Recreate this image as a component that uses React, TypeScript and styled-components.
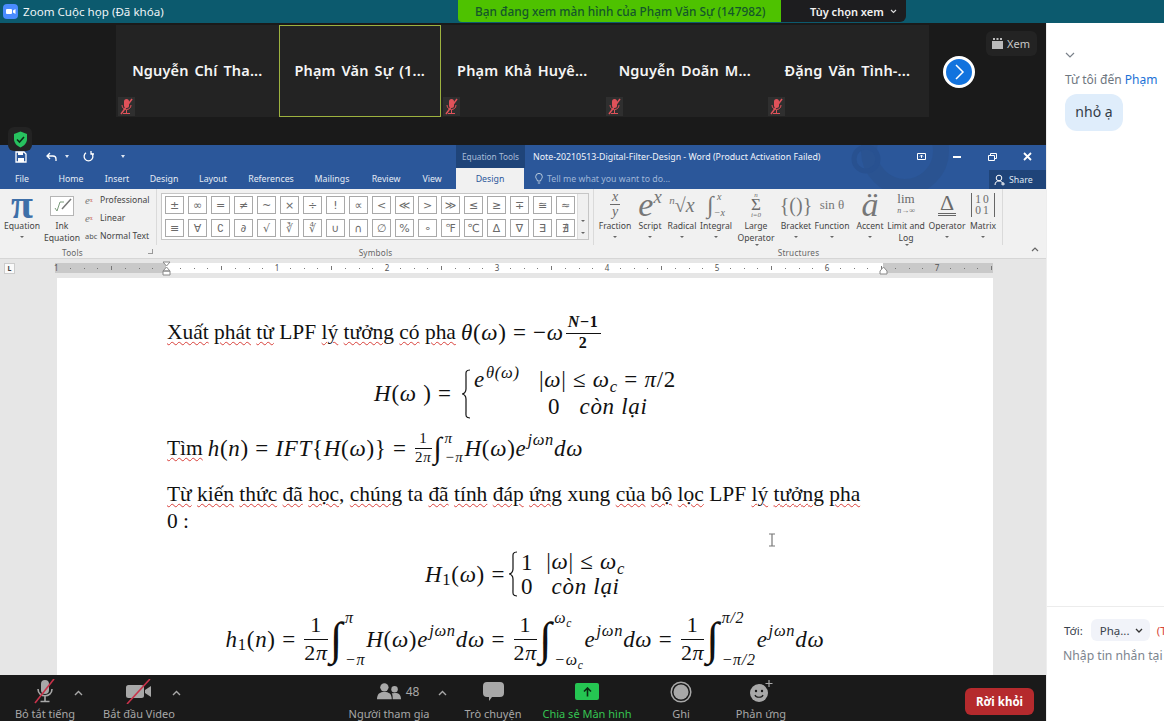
import React from "react";
import styled, { createGlobalStyle } from "styled-components";

const UI = `"Noto Sans", "Open Sans", sans-serif`;
const SERIF = `"Liberation Serif", serif`;

const GlobalStyle = createGlobalStyle`
  html, body { margin: 0; padding: 0; background: #1a1a1a; }
  * { box-sizing: border-box; }
`;

const Screen = styled.div`
  width: 1164px;
  height: 721px;
  position: relative;
  overflow: hidden;
  display: flex;
  flex-direction: column;
  font-family: ${UI};
`;

/* ---------- zoom title bar ---------- */
const TitleBar = styled.div`
  height: 23px;
  flex: none;
  display: flex;
  background: #0c5a6e;
`;
const AppTitle = styled.div`
  width: 458px;
  display: flex;
  align-items: center;
  gap: 5px;
  padding-left: 3px;
  color: #eef4f6;
  font-size: 11.6px;
`;
const Banner = styled.div`
  width: 323px;
  height: 22px;
  background: #4ec200;
  color: #14572a;
  font-size: 11.85px;
  font-weight: 500;
  border-bottom-left-radius: 4px;
  display: flex;
  align-items: center;
  padding-left: 17px;
  white-space: nowrap;
`;
const ViewOptions = styled.div`
  width: 125px;
  height: 22px;
  background: #1d1d1f;
  color: #f2f2f2;
  font-size: 11px;
  font-weight: 600;
  border-bottom-right-radius: 6px;
  display: flex;
  align-items: center;
  gap: 6px;
  padding-left: 29px;
`;

const Body = styled.div`
  flex: 1;
  min-height: 0;
  display: flex;
`;
const Left = styled.div`
  width: 1046px;
  flex: none;
  display: flex;
  flex-direction: column;
`;

/* ---------- gallery strip ---------- */
const Gallery = styled.div`
  height: 122px;
  flex: none;
  background: #1a1a1a;
  display: flex;
  padding: 2px 0 0 116px;
`;
const Tile = styled.div<{ $active?: boolean }>`
  position: relative;
  width: 162.5px;
  height: 92px;
  flex: none;
  background: #232323;
  border: 1px solid ${(p) => (p.$active ? "#9db23f" : "transparent")};
  color: #f5f5f5;
  font-size: 14.5px;
  font-weight: 600;
  letter-spacing: 0.15px;
  word-spacing: 2px;
  display: flex;
  align-items: center;
  justify-content: center;
  padding-bottom: 3px;
  white-space: nowrap;
`;
const MuteBadge = styled.div`
  position: absolute;
  left: 1px;
  bottom: 0;
  width: 17px;
  height: 19px;
  background: #2f2f2f;
  display: flex;
  align-items: center;
  justify-content: center;
`;
const NextWrap = styled.div`
  margin: 30px 0 0 14px;
  width: 32px;
  height: 32px;
  flex: none;
`;
const ViewButton = styled.div`
  margin: 6px 0 0 11px;
  width: 51px;
  height: 25px;
  background: #232323;
  border-radius: 6px;
  color: #c8c8c8;
  font-size: 11px;
  display: flex;
  align-items: center;
  justify-content: center;
  gap: 4px;
`;
const ShieldBox = styled.div`
  position: absolute;
  left: 8px;
  top: 127px;
  width: 24px;
  height: 24px;
  background: #232323;
  border-radius: 6px;
  display: flex;
  align-items: center;
  justify-content: center;
`;

/* ---------- word window ---------- */
const Word = styled.div`
  flex: 1;
  min-height: 0;
  display: flex;
  flex-direction: column;
`;
const WordHead = styled.div`
  position: relative;
  height: 44px;
  flex: none;
  background: #2b579a;
  color: #f2f5fa;
  overflow: hidden;
`;
const HeadPattern = styled.svg`
  position: absolute;
  left: 780px;
  top: 0;
`;
const QatRow = styled.div`
  position: relative;
  height: 23px;
  display: flex;
  align-items: center;
  font-size: 9.5px;
`;
const QatIcon = styled.div<{ $w: number }>`
  width: ${(p) => p.$w}px;
  flex: none;
  display: flex;
  justify-content: center;
  align-items: center;
`;
const ContextLabel = styled.div`
  margin-left: 316px;
  width: 69px;
  height: 23px;
  flex: none;
  background: #1f4479;
  color: #a9bcd8;
  font-size: 8.3px;
  display: flex;
  align-items: center;
  justify-content: center;
`;
const DocTitle = styled.div`
  margin-left: 8px;
  width: 371px;
  flex: none;
  font-size: 8.8px;
  white-space: nowrap;
`;
const WinButton = styled.div`
  width: 35.3px;
  flex: none;
  display: flex;
  justify-content: center;
`;
const TabRow = styled.div`
  position: relative;
  height: 21px;
  display: flex;
  align-items: center;
  font-size: 8.8px;
`;
const Tab = styled.div<{ $w: number; $ml?: number; $active?: boolean }>`
  width: ${(p) => p.$w}px;
  margin-left: ${(p) => p.$ml ?? 0}px;
  height: 21px;
  flex: none;
  display: flex;
  align-items: center;
  justify-content: center;
  background: ${(p) => (p.$active ? "#f1f1f1" : "transparent")};
  color: ${(p) => (p.$active ? "#2b579a" : "#e6ecf5")};
`;
const TellMe = styled.div`
  margin-left: 11px;
  width: 454px;
  flex: none;
  display: flex;
  align-items: center;
  gap: 4px;
  color: #9fb6d8;
  font-size: 8.8px;
`;
const ShareBox = styled.div`
  width: 57px;
  height: 19px;
  flex: none;
  align-self: flex-end;
  background: #1f4479;
  display: flex;
  align-items: center;
  gap: 3px;
  padding-left: 5px;
  color: #dfe7f2;
  font-size: 8.8px;
`;

/* ---------- ribbon ---------- */
const Ribbon = styled.div`
  height: 70px;
  flex: none;
  background: #f1f1f1;
  border-bottom: 1px solid #d6d6d6;
  display: flex;
  color: #444;
  font-size: 8.6px;
`;
const Group = styled.div<{ $w: number }>`
  width: ${(p) => p.$w}px;
  flex: none;
  display: flex;
  flex-direction: column;
  position: relative;
`;
const GroupBody = styled.div`
  flex: 1;
  min-height: 0;
  display: flex;
  border-right: 1px solid #dadada;
  margin-bottom: 2px;
`;
const GroupLabel = styled.div<{ $pr?: number }>`
  height: 11px;
  line-height: 11px;
  text-align: center;
  color: #666;
  font-size: 8.2px;
  letter-spacing: 0.2px;
  padding-right: ${(p) => p.$pr ?? 0}px;
`;
const RibbonItem = styled.div<{ $w: number }>`
  width: ${(p) => p.$w}px;
  flex: none;
  display: flex;
  flex-direction: column;
  align-items: center;
  text-align: center;
  line-height: 12px;
  white-space: nowrap;
`;
const GlyphBox = styled.div`
  height: 31px;
  flex: none;
  display: flex;
  align-items: center;
  justify-content: center;
  font-family: ${SERIF};
  color: #6a6a6a;
`;
const Caret = styled.span`
  display: block;
  margin: 4px auto 0;
  width: 0;
  height: 0;
  border-left: 2px solid transparent;
  border-right: 2px solid transparent;
  border-top: 2px solid #666;
`;
const CaretInline = styled(Caret)`
  display: inline-block;
  margin: 0 0 1px 2px;
  vertical-align: middle;
`;
const PiGlyph = styled.span`
  font-family: ${SERIF};
  font-size: 40px;
  font-weight: 700;
  color: #3e6fa8;
  line-height: 24px;
`;
const InkBox = styled.div`
  width: 24px;
  height: 20px;
  margin-top: 7px;
  border: 1px solid #b5b5b5;
  background: #fff;
  display: flex;
  align-items: center;
  justify-content: center;
`;
const InkSpacer = styled.div`
  height: 4px;
  flex: none;
`;
const ToolList = styled.div`
  margin-left: 5px;
  padding-top: 5px;
  display: flex;
  flex-direction: column;
  gap: 6px;
`;
const ToolRow = styled.div`
  display: flex;
  align-items: center;
  gap: 1px;
  height: 12px;
  white-space: nowrap;
`;
const ToolMini = styled.span`
  width: 14px;
  font-family: ${SERIF};
  font-style: italic;
  font-size: 11px;
  color: #777;
`;
const MiniDot = styled.span`
  color: #c8564a;
  font-size: 9px;
  font-style: normal;
`;
const AbcMini = styled.span`
  width: 14px;
  font-size: 7.4px;
  color: #555;
`;
const Launcher = styled.div`
  position: absolute;
  right: 4px;
  bottom: 4px;
  width: 5px;
  height: 5px;
  border-right: 1px solid #999;
  border-bottom: 1px solid #999;
`;
const SymbolBox = styled.div`
  margin: 4px 0 0 4px;
  width: 428px;
  height: 47px;
  background: #fff;
  border: 1px solid #c6c6c6;
  display: flex;
`;
const SymbolGrid = styled.div`
  width: 415px;
  padding: 2px 0 0 3px;
  display: grid;
  grid-template-columns: repeat(18, 23px);
  grid-auto-rows: 23px;
`;
const SymbolKey = styled.div`
  width: 19px;
  height: 18px;
  border: 1px solid #a9a9a9;
  color: #6a6a6a;
  font-family: "DejaVu Sans", sans-serif;
  font-size: 11px;
  display: flex;
  align-items: center;
  justify-content: center;
`;
const ScrollCol = styled.div`
  flex: 1;
  background: #f0f0f0;
  border-left: 1px solid #ddd;
  display: flex;
  flex-direction: column;
  align-items: center;
  justify-content: flex-end;
  gap: 6px;
  padding-bottom: 5px;
`;
const CollapseArrow = styled.div`
  margin: auto 7px 3px auto;
`;

/* structure glyphs */
const Frac = styled.span`
  display: inline-flex;
  flex-direction: column;
  align-items: center;
  vertical-align: middle;
  line-height: 1;
`;
const FracTop = styled.span`
  border-bottom: 1px solid currentColor;
  padding: 0 2px;
`;
const SmallFrac = styled(Frac)`
  font-size: 14px;
  font-style: italic;
`;
const BigE = styled.span<{ $size: number }>`
  font-size: ${(p) => p.$size}px;
  font-style: italic;
  color: #777;
  line-height: 26px;
`;
const BigSup = styled.sup`
  font-size: 0.55em;
  vertical-align: 0.7em;
  line-height: 0;
`;
const SumStack = styled.span`
  display: inline-flex;
  flex-direction: column;
  align-items: center;
  font-size: 7px;
  line-height: 8px;
  font-style: italic;
`;
const SumSign = styled.span`
  font-size: 17px;
  line-height: 12px;
  font-style: normal;
`;
const GlyphLimits = styled.span`
  display: inline-flex;
  flex-direction: column;
  justify-content: space-between;
  height: 26px;
  font-size: 10px;
  line-height: 10px;
  font-style: italic;
`;
const LimStack = styled.span`
  display: inline-flex;
  flex-direction: column;
  align-items: center;
  font-size: 13px;
  line-height: 12px;
`;
const LimSub = styled.span`
  font-size: 8px;
  font-style: italic;
`;
const OpStack = styled.span`
  border-bottom: 3px double #666;
  font-size: 22px;
  line-height: 20px;
  padding: 0 2px;
`;
const MatrixGlyph = styled.span`
  border-left: 1px solid #666;
  border-right: 1px solid #666;
  padding: 1px 3px;
  font-size: 11.5px;
  line-height: 11px;
  letter-spacing: 2px;
  text-align: center;
  display: inline-block;
`;
const UprightSpan = styled.span`
  font-style: normal;
`;

/* ---------- ruler ---------- */
const RulerRow = styled.div`
  position: relative;
  height: 18px;
  flex: none;
  background: #e6e6e6;
  display: flex;
  align-items: center;
`;
const RulerCorner = styled.div`
  margin-left: 4px;
  width: 11px;
  height: 11px;
  background: #fafafa;
  border: 1px solid #ccc;
  color: #444;
  font-size: 7px;
  font-weight: 700;
  line-height: 9px;
  text-align: center;
`;
const RulerTrack = styled.div`
  margin-left: 40px;
  width: 938px;
  height: 10px;
  overflow: hidden;
  display: flex;
  color: #555;
  font-size: 8px;
  background: linear-gradient(90deg, #c9c9c9 111px, #fff 111px, #fff 828px, #c9c9c9 828px);
  padding-left: 2px;
`;
const RulerCell = styled.div`
  width: 110px;
  flex: none;
  display: grid;
  grid-template-columns: repeat(8, 13.75px);
  align-items: center;
  justify-items: end;
`;
const Tick = styled.span<{ $big?: boolean }>`
  width: 1px;
  height: ${(p) => (p.$big ? 4 : 1)}px;
  background: #777;
`;
const RulerNum = styled.span`
  transform: translateX(50%);
  line-height: 10px;
`;
const RulerFirst = styled.span`
  position: absolute;
  left: 54px;
  line-height: 10px;
  font-size: 8px;
  color: #555;
`;
const IndentMark = styled.svg<{ $x: number }>`
  position: absolute;
  left: ${(p) => p.$x}px;
  top: 2px;
`;

/* ---------- document ---------- */
const DocArea = styled.div`
  position: relative;
  flex: 1;
  min-height: 0;
  background: #e6e6e6;
  overflow: hidden;
  padding: 1px 0 0 57px;
`;
const Page = styled.div`
  width: 936px;
  height: 600px;
  background: #fff;
  padding: 35px 110px 0;
  color: #111;
  font-family: ${SERIF};
  font-size: 21.45px;
  line-height: 27px;
`;
const Para = styled.div<{ $mt?: number }>`
  margin-top: ${(p) => p.$mt ?? 0}px;
  white-space: nowrap;
  display: flex;
  align-items: center;
`;
const TextBlock = styled.div<{ $mt?: number }>`
  margin-top: ${(p) => p.$mt ?? 0}px;
  white-space: nowrap;
`;
const Wavy = styled.span`
  text-decoration: underline wavy #d8403a 1px;
  text-underline-offset: 2px;
`;
const MathRow = styled.span`
  display: inline-flex;
  align-items: center;
  margin-left: 5px;
  font-size: 23px;
  letter-spacing: 0.7px;
  white-space: pre;
`;
const MathCenter = styled.div<{ $mt?: number; $h?: number }>`
  margin-top: ${(p) => p.$mt ?? 0}px;
  height: ${(p) => (p.$h ? `${p.$h}px` : "auto")};
  display: flex;
  justify-content: center;
  align-items: center;
  font-size: 23px;
  letter-spacing: 0.7px;
  white-space: pre;
  overflow: visible;
`;
const I = styled.i`
  font-style: italic;
`;
const Sup = styled.span`
  font-size: 0.72em;
  font-style: italic;
  position: relative;
  top: -0.55em;
  margin-left: 1px;
`;
const Sub = styled.span`
  font-size: 0.72em;
  font-style: italic;
  position: relative;
  top: 0.3em;
`;
const EqFrac = styled.span<{ $size?: number }>`
  display: inline-flex;
  flex-direction: column;
  align-items: center;
  font-size: ${(p) => p.$size ?? 15}px;
  line-height: 1.18;
  margin: 0 2px;
`;
const EqFracTop = styled.span`
  border-bottom: 1px solid #111;
  padding: 0 2px 1px;
  align-self: stretch;
  text-align: center;
`;
const IntWrap = styled.span<{ $size: number }>`
  display: inline-flex;
  align-items: center;
  font-size: ${(p) => p.$size}px;
  line-height: 1;
  margin-right: 1px;
`;
const IntSign = styled.span`
  font-family: ${SERIF};
`;
const IntLimits = styled.span<{ $size: number; $h: number }>`
  display: inline-flex;
  flex-direction: column;
  justify-content: space-between;
  height: ${(p) => p.$h}px;
  font-size: ${(p) => p.$size}px;
  line-height: 1;
  margin-left: 2px;
  font-style: italic;
`;
const Brace = styled.svg`
  margin: 0 3px;
  flex: none;
`;
const Cases = styled.span<{ $cols: string; $rowH: number }>`
  display: inline-grid;
  grid-template-columns: ${(p) => p.$cols};
  grid-auto-rows: ${(p) => p.$rowH}px;
  align-items: center;
  justify-items: center;
`;
const IBeam = styled.svg`
  position: absolute;
  left: 768px;
  top: 256px;
`;

/* ---------- zoom toolbar ---------- */
const Toolbar = styled.div`
  height: 46px;
  flex: none;
  background: #1a1a1a;
  display: flex;
  position: relative;
`;
const ToolItem = styled.div<{ $w: number; $ml?: number; $green?: boolean }>`
  position: relative;
  width: ${(p) => p.$w}px;
  margin-left: ${(p) => p.$ml ?? 0}px;
  flex: none;
  display: flex;
  flex-direction: column;
  align-items: center;
  color: ${(p) => (p.$green ? "#35c552" : "#a8a8a8")};
  font-size: 11px;
  white-space: nowrap;
`;
const ToolIcon = styled.div<{ $pl?: number }>`
  height: 30px;
  display: flex;
  align-items: center;
  justify-content: center;
  gap: 5px;
  padding-top: 4px;
  padding-left: ${(p) => p.$pl ?? 0}px;
  color: #a8a8a8;
  font-size: 12px;
`;
const ToolLabel = styled.div`
  line-height: 14px;
  margin-top: 3px;
`;
const ToolCaret = styled.svg<{ $x: number }>`
  position: absolute;
  left: ${(p) => p.$x}px;
  top: 15px;
`;
const ShareIcon = styled.div`
  width: 24px;
  height: 17px;
  background: #25c552;
  border-radius: 2px;
  display: flex;
  align-items: center;
  justify-content: center;
`;
const LeaveButton = styled.div`
  margin: 13px 12px 0 auto;
  width: 69px;
  height: 27px;
  background: #b52a2d;
  border-radius: 6px;
  color: #fff;
  font-size: 11.5px;
  font-weight: 700;
  display: flex;
  align-items: center;
  justify-content: center;
`;

/* ---------- chat ---------- */
const Chat = styled.div`
  width: 118px;
  flex: none;
  background: #fff;
  border-left: 1px solid #eee;
  display: flex;
  flex-direction: column;
  overflow: hidden;
  white-space: nowrap;
`;
const ChatHead = styled.div`
  height: 36px;
  flex: none;
  padding: 18px 0 0 18px;
`;
const ChatMeta = styled.div`
  margin: 13px 0 0 18px;
  font-size: 12px;
  line-height: 16px;
  color: #6e7680;
`;
const ChatTarget = styled.span`
  color: #1a71d6;
`;
const ChatBubble = styled.div`
  margin: 6px 0 0 18px;
  width: 58px;
  height: 37px;
  background: #dfedfb;
  border-radius: 12px;
  color: #333c47;
  font-size: 14px;
  display: flex;
  align-items: center;
  justify-content: center;
  padding-bottom: 2px;
`;
const ChatFooter = styled.div`
  margin-top: auto;
  height: 115px;
  flex: none;
  border-top: 1px solid #ececec;
  padding: 12px 0 0 17px;
`;
const ToRow = styled.div`
  display: flex;
  align-items: center;
  gap: 8px;
  font-size: 11.5px;
  color: #39424c;
`;
const ToPill = styled.div`
  width: 59px;
  height: 22px;
  flex: none;
  background: #f1f3f9;
  border-radius: 6px;
  display: flex;
  align-items: center;
  gap: 5px;
  padding-left: 9px;
  font-size: 11.5px;
`;
const ToHint = styled.span`
  color: #d9483b;
  margin-left: -1px;
`;
const ChatInput = styled.div`
  margin: 5px 0 0 -1px;
  font-size: 12.2px;
  line-height: 20px;
  color: #7c848e;
`;

const CaretWhite = styled.span`
  width: 0;
  height: 0;
  border-left: 2.5px solid transparent;
  border-right: 2.5px solid transparent;
  border-top: 3px solid #dfe7f2;
`;

/* ---------- drawn icons ---------- */
const MuteMini = () => (
  <svg width="15" height="17" viewBox="0 0 15 17">
    <rect x="5" y="1" width="5" height="9" rx="2.5" fill="#e0525a" />
    <path d="M3 7c0 6 9 6 9 0M7.5 12v3M4 15.5h7" stroke="#e0525a" fill="none" />
    <path d="M13 1 2 16" stroke="#e0525a" strokeWidth="1.5" />
  </svg>
);

const MicIcon = () => (
  <svg width="26" height="25" viewBox="0 0 26 25">
    <rect x="9" y="1" width="8" height="14" rx="4" fill="#a8a8a8" />
    <path d="M6 10c0 9 14 9 14 0M13 17v5M8.500 22.500h9" stroke="#a8a8a8" strokeWidth="1.6" fill="none" />
    <path d="M22 0 3 24" stroke="#c8324a" strokeWidth="1.6" />
  </svg>
);

const VideoIcon = () => (
  <svg width="28" height="25" viewBox="0 0 28 25">
    <rect x="1" y="6" width="18" height="13" rx="2.5" fill="#a8a8a8" />
    <path d="M20 11l6-4v11l-6-4z" fill="#a8a8a8" />
    <path d="M25 0 2 25" stroke="#c8324a" strokeWidth="1.6" />
  </svg>
);

const PeopleIcon = () => (
  <svg width="24" height="19" viewBox="0 0 26 19">
    <circle cx="8" cy="5" r="4.500" fill="#a8a8a8" />
    <circle cx="19" cy="7" r="3.500" fill="#a8a8a8" />
    <path d="M0 18c0-6 3-8 8-8s8 2 8 8z" fill="#a8a8a8" />
    <path d="M17 18h9c0-5-2-7-7-7-1 0-2 .2-3 .5 1 1.500 1 4 1 6.500z" fill="#a8a8a8" />
  </svg>
);

const ChatIcon = () => (
  <svg width="21" height="20" viewBox="0 0 21 20">
    <path d="M4 0h13a4 4 0 0 1 4 4v7a4 4 0 0 1-4 4H9l-3 4v-4H4a4 4 0 0 1-4-4V4a4 4 0 0 1 4-4z" fill="#a8a8a8" />
  </svg>
);

const RecordIcon = () => (
  <svg width="22" height="22" viewBox="0 0 22 22">
    <circle cx="11" cy="11" r="9.800" fill="none" stroke="#a8a8a8" strokeWidth="1.500" />
    <circle cx="11" cy="11" r="7.500" fill="#a8a8a8" />
  </svg>
);

const ReactIcon = () => (
  <svg width="24" height="23" viewBox="0 0 24 23">
    <circle cx="10" cy="13" r="9" fill="#a8a8a8" />
    <circle cx="7" cy="11" r="1.200" fill="#1a1a1a" />
    <circle cx="13" cy="11" r="1.200" fill="#1a1a1a" />
    <path d="M6 15c1 3 7 3 8 0" stroke="#1a1a1a" strokeWidth="1.200" fill="none" />
    <path d="M20 0v7M16.500 3.500h7" stroke="#a8a8a8" strokeWidth="1.200" />
  </svg>
);

const UpCaret = ({ x }: { x: number }) => (
  <ToolCaret $x={x} width="9" height="6" viewBox="0 0 9 6">
    <path d="M1 5l3.500-3.500L8 5" stroke="#a8a8a8" strokeWidth="1.400" fill="none" />
  </ToolCaret>
);

const CurlyBrace = ({ h, w = 10 }: { h: number; w?: number }) => (
  <Brace width={w} height={h} viewBox={`0 0 10 ${h}`} preserveAspectRatio="none">
    <path
      d={`M9 1C4 1 5 4 5 8V${h / 2 - 5}C5 ${h / 2 - 2} 3 ${h / 2} 1 ${h / 2}C3 ${h / 2} 5 ${h / 2 + 2} 5 ${h / 2 + 5}V${h - 8}C5 ${h - 4} 4 ${h - 1} 9 ${h - 1}`}
      fill="none"
      stroke="#111"
      strokeWidth="1.200"
    />
  </Brace>
);

const SYMBOLS = [
  "±", "∞", "=", "≠", "~", "×", "÷", "!", "∝", "<", "≪", ">", "≫", "≤", "≥", "∓", "≅", "≈",
  "≡", "∀", "∁", "∂", "√", "∛", "∜", "∪", "∩", "∅", "%", "∘", "℉", "℃", "∆", "∇", "∃", "∄",
];

const TILES = [
  { name: "Nguyễn Chí Tha...", muted: true },
  { name: "Phạm Văn Sự (1...", active: true },
  { name: "Phạm Khả Huyê...", muted: true },
  { name: "Nguyễn Doãn M...", muted: true },
  { name: "Đặng Văn Tình-...", muted: true },
];

const TABS = [
  { label: "File", w: 44 },
  { label: "Home", w: 54 },
  { label: "Insert", w: 38 },
  { label: "Design", w: 56 },
  { label: "Layout", w: 42 },
  { label: "References", w: 74 },
  { label: "Mailings", w: 48 },
  { label: "Review", w: 60 },
  { label: "View", w: 32 },
];

const RULER = [0, 1, 2, 3, 4, 5, 6, 7, 8];

const Ruler = () => (
  <RulerTrack>
    {RULER.map((n) => (
      <RulerCell key={n}>
        {[0, 1, 2, 3, 4, 5, 6].map((t) => (
          <Tick key={t} $big={t === 3} />
        ))}
        {n > 0 ? <RulerNum>{n}</RulerNum> : <Tick />}
      </RulerCell>
    ))}
  </RulerTrack>
);

const Ribbons = () => (
  <Ribbon>
    <Group $w={157}>
      <GroupBody>
        <RibbonItem $w={44}>
          <GlyphBox>
            <PiGlyph>π</PiGlyph>
          </GlyphBox>
          Equation
          <Caret />
        </RibbonItem>
        <RibbonItem $w={36}>
          <InkBox>
            <svg width="20" height="16" viewBox="0 0 20 16">
              <path d="M3 10l2 3 3-9h4" stroke="#7a9a7a" fill="none" />
              <path d="M10 11 19 1" stroke="#777" strokeWidth="1.500" />
            </svg>
          </InkBox>
          <InkSpacer />
          Ink
          <br />
          Equation
        </RibbonItem>
        <ToolList>
          <ToolRow>
            <ToolMini>
              e<MiniDot>ˣ</MiniDot>
            </ToolMini>
            Professional
          </ToolRow>
          <ToolRow>
            <ToolMini>
              e<MiniDot>ˣ</MiniDot>
            </ToolMini>
            Linear
          </ToolRow>
          <ToolRow>
            <AbcMini>abc</AbcMini>Normal Text
          </ToolRow>
        </ToolList>
      </GroupBody>
      <GroupLabel $pr={12}>Tools</GroupLabel>
      <Launcher />
    </Group>

    <Group $w={437}>
      <GroupBody>
        <SymbolBox>
          <SymbolGrid>
            {SYMBOLS.map((s) => (
              <SymbolKey key={s}>{s}</SymbolKey>
            ))}
          </SymbolGrid>
          <ScrollCol>
            <Caret />
            <Caret />
          </ScrollCol>
        </SymbolBox>
      </GroupBody>
      <GroupLabel>Symbols</GroupLabel>
    </Group>

    <Group $w={409}>
      <GroupBody>
        <RibbonItem $w={42}>
          <GlyphBox>
            <SmallFrac>
              <FracTop>x</FracTop>
              <span>y</span>
            </SmallFrac>
          </GlyphBox>
          Fraction
          <Caret />
        </RibbonItem>
        <RibbonItem $w={28}>
          <GlyphBox>
            <BigE $size={34}>
              e<BigSup>x</BigSup>
            </BigE>
          </GlyphBox>
          Script
          <Caret />
        </RibbonItem>
        <RibbonItem $w={36}>
          <GlyphBox>
            <BigE $size={20}>
              <BigSup>n</BigSup>√x
            </BigE>
          </GlyphBox>
          Radical
          <Caret />
        </RibbonItem>
        <RibbonItem $w={32}>
          <GlyphBox>
            <BigE $size={24}>∫</BigE>
            <GlyphLimits>
              <span>x</span>
              <span>−x</span>
            </GlyphLimits>
          </GlyphBox>
          Integral
          <Caret />
        </RibbonItem>
        <RibbonItem $w={48}>
          <GlyphBox>
            <SumStack>
              n<SumSign>Σ</SumSign>i=0
            </SumStack>
          </GlyphBox>
          Large
          <br />
          Operator
          <CaretInline />
        </RibbonItem>
        <RibbonItem $w={32}>
          <GlyphBox>
            <BigE $size={20}>
              <UprightSpan>{"{()}"}</UprightSpan>
            </BigE>
          </GlyphBox>
          Bracket
          <Caret />
        </RibbonItem>
        <RibbonItem $w={40}>
          <GlyphBox>
            <BigE $size={13}>
              <UprightSpan>sin θ</UprightSpan>
            </BigE>
          </GlyphBox>
          Function
          <Caret />
        </RibbonItem>
        <RibbonItem $w={36}>
          <GlyphBox>
            <BigE $size={34}>ä</BigE>
          </GlyphBox>
          Accent
          <Caret />
        </RibbonItem>
        <RibbonItem $w={36}>
          <GlyphBox>
            <LimStack>
              lim
              <LimSub>n→∞</LimSub>
            </LimStack>
          </GlyphBox>
          Limit and
          <br />
          Log
          <CaretInline />
        </RibbonItem>
        <RibbonItem $w={46}>
          <GlyphBox>
            <OpStack>Δ</OpStack>
          </GlyphBox>
          Operator
          <Caret />
        </RibbonItem>
        <RibbonItem $w={26}>
          <GlyphBox>
            <MatrixGlyph>
              10
              <br />
              01
            </MatrixGlyph>
          </GlyphBox>
          Matrix
          <Caret />
        </RibbonItem>
      </GroupBody>
      <GroupLabel>Structures</GroupLabel>
    </Group>
    <CollapseArrow>
      <svg width="8" height="5" viewBox="0 0 8 5">
        <path d="M1 4l3-3 3 3" stroke="#666" strokeWidth="1.200" fill="none" />
      </svg>
    </CollapseArrow>
  </Ribbon>
);

const Document = () => (
  <DocArea>
    <Page>
      <Para>
        <span>
          <Wavy>Xuất</Wavy> <Wavy>phát</Wavy> <Wavy>từ</Wavy> LPF <Wavy>lý</Wavy> <Wavy>tưởng</Wavy>{" "}
          <Wavy>có</Wavy> <Wavy>pha</Wavy>
        </span>
        <MathRow>
          <I>θ</I>(<I>ω</I>) = −<I>ω</I>
          <EqFrac $size={16}>
            <EqFracTop>
              <b>
                <I>N</I>−1
              </b>
            </EqFracTop>
            <b>2</b>
          </EqFrac>
        </MathRow>
      </Para>

      <MathCenter $mt={15} $h={52}>
        <I>H</I>(<I>ω</I> ) ={" "}
        <CurlyBrace h={50} />
        <Cases $cols="auto auto" $rowH={26}>
          <span>
            <I>e</I>
            <Sup>θ(ω)</Sup>
          </span>
          <span>
            {"   "}|<I>ω</I>| ≤ <I>ω</I>
            <Sub>c</Sub> = <I>π</I>/2
          </span>
          <span />
          <span>
            0{"   "}
            <I>còn lại</I>
          </span>
        </Cases>
      </MathCenter>

      <Para $mt={10}>
        <span>
          <Wavy>Tìm</Wavy>
        </span>
        <MathRow>
          <I>h</I>(<I>n</I>) = <I>IFT</I>
          {"{"}
          <I>H</I>(<I>ω</I>)
          {"}"} ={" "}
          <EqFrac $size={15}>
            <EqFracTop>1</EqFracTop>
            <span>
              2<I>π</I>
            </span>
          </EqFrac>
          <IntWrap $size={30}>
            <IntSign>∫</IntSign>
            <IntLimits $size={15} $h={34}>
              <span>π</span>
              <span>−π</span>
            </IntLimits>
          </IntWrap>
          <I>H</I>(<I>ω</I>)<I>e</I>
          <Sup>jωn</Sup>
          <I>dω</I>
        </MathRow>
      </Para>

      <TextBlock $mt={14}>
        <Wavy>Từ</Wavy> <Wavy>kiến</Wavy> <Wavy>thức</Wavy> <Wavy>đã</Wavy> <Wavy>học</Wavy>, <Wavy>chúng</Wavy> ta{" "}
        <Wavy>đã</Wavy> <Wavy>tính</Wavy> <Wavy>đáp</Wavy> <Wavy>ứng</Wavy> xung <Wavy>của</Wavy> <Wavy>bộ</Wavy>{" "}
        <Wavy>lọc</Wavy> LPF <Wavy>lý</Wavy> <Wavy>tưởng</Wavy> <Wavy>pha</Wavy>
        <br />0 :
      </TextBlock>

      <MathCenter $mt={14} $h={50}>
        <I>H</I>
        <Sub>
          <UprightSpan>1</UprightSpan>
        </Sub>
        (<I>ω</I>) =<CurlyBrace h={46} />
        <Cases $cols="auto auto" $rowH={24}>
          <span>1</span>
          <span>
            {"  "}|<I>ω</I>| ≤ <I>ω</I>
            <Sub>c</Sub>
          </span>
          <span>0</span>
          <span>
            {"  "}
            <I>còn lại</I>
          </span>
        </Cases>
      </MathCenter>

      <MathCenter $mt={6} $h={68}>
        <I>h</I>
        <Sub>
          <UprightSpan>1</UprightSpan>
        </Sub>
        (<I>n</I>) ={" "}
        <EqFrac $size={22}>
          <EqFracTop>1</EqFracTop>
          <span>
            2<I>π</I>
          </span>
        </EqFrac>
        <IntWrap $size={46}>
          <IntSign>∫</IntSign>
          <IntLimits $size={16} $h={58}>
            <span>π</span>
            <span>−π</span>
          </IntLimits>
        </IntWrap>
        <I>H</I>(<I>ω</I>)<I>e</I>
        <Sup>jωn</Sup>
        <I>dω</I> ={" "}
        <EqFrac $size={22}>
          <EqFracTop>1</EqFracTop>
          <span>
            2<I>π</I>
          </span>
        </EqFrac>
        <IntWrap $size={46}>
          <IntSign>∫</IntSign>
          <IntLimits $size={16} $h={58}>
            <span>
              ω<Sub>c</Sub>
            </span>
            <span>
              −ω<Sub>c</Sub>
            </span>
          </IntLimits>
        </IntWrap>
        <I>e</I>
        <Sup>jωn</Sup>
        <I>dω</I> ={" "}
        <EqFrac $size={22}>
          <EqFracTop>1</EqFracTop>
          <span>
            2<I>π</I>
          </span>
        </EqFrac>
        <IntWrap $size={46}>
          <IntSign>∫</IntSign>
          <IntLimits $size={16} $h={58}>
            <span>π/2</span>
            <span>−π/2</span>
          </IntLimits>
        </IntWrap>
        <I>e</I>
        <Sup>jωn</Sup>
        <I>dω</I>
      </MathCenter>
    </Page>
    <IBeam width="8" height="14" viewBox="0 0 8 14">
      <path d="M1 1h6M4 1v12M1 13h6" stroke="#777" strokeWidth="1.200" fill="none" />
    </IBeam>
  </DocArea>
);

const App: React.FC = () => {
  return (
    <Screen>
      <GlobalStyle />

      <TitleBar>
        <AppTitle>
          <svg width="15" height="15" viewBox="0 0 15 15">
            <rect width="15" height="15" rx="4" fill="#4a8cff" />
            <rect x="3" y="5" width="6" height="5" rx="1" fill="#fff" />
            <path d="M10 6.500 12.500 5v5L10 8.500z" fill="#fff" />
          </svg>
          Zoom Cuộc họp (Đã khóa)
        </AppTitle>
        <Banner>Bạn đang xem màn hình của Phạm Văn Sự (147982)</Banner>
        <ViewOptions>
          Tùy chọn xem
          <svg width="7" height="5" viewBox="0 0 7 5">
            <path d="M1 1l2.500 2.500L6 1" stroke="#ddd" strokeWidth="1.100" fill="none" />
          </svg>
        </ViewOptions>
      </TitleBar>

      <Body>
        <Left>
          <Gallery>
            {TILES.map((t) => (
              <Tile key={t.name} $active={t.active}>
                {t.name}
                {t.muted && (
                  <MuteBadge>
                    <MuteMini />
                  </MuteBadge>
                )}
              </Tile>
            ))}
            <NextWrap>
              <svg width="32" height="34" viewBox="0 0 32 34">
                <circle cx="16" cy="17" r="14.500" fill="#1273de" stroke="#fff" strokeWidth="3" />
                <path d="M13 10l7 7-7 7" stroke="#fff" strokeWidth="1.500" fill="none" />
              </svg>
            </NextWrap>
            <ViewButton>
              <svg width="11" height="11" viewBox="0 0 11 11">
                <path d="M0 3h11v8H0z" fill="#bbb" />
                <path d="M1 0h2v2H1zM4.500 0h2v2h-2zM8 0h2v2H8z" fill="#bbb" />
              </svg>
              Xem
            </ViewButton>
          </Gallery>

          <Word>
            <WordHead>
              <HeadPattern width="180" height="44" viewBox="0 0 180 44">
                <circle cx="125" cy="6" r="36" fill="none" stroke="#2a5391" strokeWidth="16" />
                <circle cx="86" cy="14" r="12" fill="none" stroke="#285190" strokeWidth="5" />
              </HeadPattern>
              <QatRow>
                <QatIcon $w={42}>
                  <svg width="12" height="12" viewBox="0 0 12 12">
                    <path d="M1 1h8l2 2v8H1z" fill="none" stroke="#fff" strokeWidth="1.300" />
                    <path d="M3 1h5v3H3zM3 7h6v4H3z" fill="#fff" />
                  </svg>
                </QatIcon>
                <QatIcon $w={20}>
                  <svg width="12" height="10" viewBox="0 0 12 10">
                    <path d="M4 1 1 4l3 3M1 4h6a3 3 0 0 1 3 3v2" stroke="#fff" strokeWidth="1.300" fill="none" />
                  </svg>
                </QatIcon>
                <QatIcon $w={10}>
                  <CaretWhite />
                </QatIcon>
                <QatIcon $w={33}>
                  <svg width="11" height="11" viewBox="0 0 11 11">
                    <path d="M3 1.800A4.400 4.400 0 1 0 8 1.800M8 0v3h3" stroke="#fff" strokeWidth="1.300" fill="none" />
                  </svg>
                </QatIcon>
                <QatIcon $w={35}>
                  <CaretWhite />
                </QatIcon>
                <ContextLabel>Equation Tools</ContextLabel>
                <DocTitle>Note-20210513-Digital-Filter-Design - Word (Product Activation Failed)</DocTitle>
                <WinButton>
                  <svg width="9" height="7" viewBox="0 0 9 7">
                    <path d="M.500.500h8v6h-8zM4.500 5V2M3 3.500l1.500-1.500L6 3.500" stroke="#fff" fill="none" />
                  </svg>
                </WinButton>
                <WinButton>
                  <svg width="8" height="2" viewBox="0 0 8 2">
                    <rect width="8" height="2" fill="#fff" />
                  </svg>
                </WinButton>
                <WinButton>
                  <svg width="9" height="8" viewBox="0 0 9 8">
                    <path d="M.500 2.500h6v5h-6zM2.500 2.500v-2h6v5h-2" stroke="#fff" fill="none" />
                  </svg>
                </WinButton>
                <WinButton>
                  <svg width="9" height="9" viewBox="0 0 9 9">
                    <path d="M1 1l7 7M8 1 1 8" stroke="#fff" strokeWidth="1.800" />
                  </svg>
                </WinButton>
              </QatRow>
              <TabRow>
                {TABS.map((t) => (
                  <Tab key={t.label} $w={t.w}>
                    {t.label}
                  </Tab>
                ))}
                <Tab $w={68} $ml={8} $active>
                  Design
                </Tab>
                <TellMe>
                  <svg width="8" height="11" viewBox="0 0 8 11">
                    <path d="M2.500 8C2 6 .700 5.500.700 3.700a3.300 3.300 0 0 1 6.600 0C7.300 5.500 6 6 5.500 8zM2.800 10h2.400" stroke="#bcd" fill="none" />
                  </svg>
                  Tell me what you want to do...
                </TellMe>
                <ShareBox>
                  <svg width="12" height="12" viewBox="0 0 12 12">
                    <circle cx="5" cy="4" r="2.800" stroke="#fff" fill="none" />
                    <path d="M1 11c0-3 2-4 4-4s3 1 3.500 2M9 8v3.500M7.200 10h3.600" stroke="#fff" fill="none" />
                  </svg>
                  Share
                </ShareBox>
              </TabRow>
            </WordHead>

            <Ribbons />

            <RulerRow>
              <RulerCorner>L</RulerCorner>
              <Ruler />
              <RulerFirst>1</RulerFirst>
              <IndentMark $x={162} width="9" height="15" viewBox="0 0 9 15">
                <path d="M1 1h7L4.500 5zM4.500 6 8 10H1zM1 10h7v4H1z" fill="#fff" stroke="#888" />
              </IndentMark>
              <IndentMark $x={879} width="9" height="15" viewBox="0 0 9 15">
                <path d="M4.500 6 8 10v3H1v-3z" fill="#fff" stroke="#888" />
              </IndentMark>
            </RulerRow>

            <Document />
          </Word>

          <Toolbar>
            <ToolItem $w={90}>
              <ToolIcon>
                <MicIcon />
              </ToolIcon>
              <ToolLabel>Bỏ tắt tiếng</ToolLabel>
              <UpCaret x={74} />
            </ToolItem>
            <ToolItem $w={90} $ml={4}>
              <ToolIcon>
                <VideoIcon />
              </ToolIcon>
              <ToolLabel>Bắt đầu Video</ToolLabel>
              <UpCaret x={78} />
            </ToolItem>
            <ToolItem $w={90} $ml={160}>
              <ToolIcon $pl={18}>
                <PeopleIcon />
                48
              </ToolIcon>
              <ToolLabel>Người tham gia</ToolLabel>
              <UpCaret x={94} />
            </ToolItem>
            <ToolItem $w={90} $ml={14}>
              <ToolIcon>
                <ChatIcon />
              </ToolIcon>
              <ToolLabel>Trò chuyện</ToolLabel>
            </ToolItem>
            <ToolItem $w={94} $ml={2} $green>
              <ToolIcon>
                <ShareIcon>
                  <svg width="9" height="10" viewBox="0 0 9 10">
                    <path d="M4.500 9.500V1.500M1 4.500l3.500-3.500L8 4.500" stroke="#0b2a12" strokeWidth="1.600" fill="none" />
                  </svg>
                </ShareIcon>
              </ToolIcon>
              <ToolLabel>Chia sẻ Màn hình</ToolLabel>
            </ToolItem>
            <ToolItem $w={90} $ml={2}>
              <ToolIcon>
                <RecordIcon />
              </ToolIcon>
              <ToolLabel>Ghi</ToolLabel>
            </ToolItem>
            <ToolItem $w={70}>
              <ToolIcon>
                <ReactIcon />
              </ToolIcon>
              <ToolLabel>Phản ứng</ToolLabel>
            </ToolItem>
            <LeaveButton>Rời khỏi</LeaveButton>
          </Toolbar>
        </Left>

        <Chat>
          <ChatHead>
            <svg width="10" height="6" viewBox="0 0 10 6">
              <path d="M1 1l4 4 4-4" stroke="#7a818a" strokeWidth="1.200" fill="none" />
            </svg>
          </ChatHead>
          <ChatMeta>
            Từ tôi đến <ChatTarget>Phạm</ChatTarget>
          </ChatMeta>
          <ChatBubble>nhỏ ạ</ChatBubble>
          <ChatFooter>
            <ToRow>
              Tới:
              <ToPill>
                Phạ...
                <svg width="8" height="5" viewBox="0 0 8 5">
                  <path d="M1 1l3 3 3-3" stroke="#333" strokeWidth="1.300" fill="none" />
                </svg>
              </ToPill>
              <ToHint>(T</ToHint>
            </ToRow>
            <ChatInput>Nhập tin nhắn tại</ChatInput>
          </ChatFooter>
        </Chat>
      </Body>

      <ShieldBox>
        <svg width="15" height="17" viewBox="0 0 15 17">
          <path d="M7.500.500 14 3v5c0 4-3 7-6.500 8.500C4 15 1 12 1 8V3z" fill="#27c25f" />
          <path d="M4 8.500l2.500 2.500 4.500-5" stroke="#0d2e18" strokeWidth="1.600" fill="none" />
        </svg>
      </ShieldBox>
    </Screen>
  );
};

export default App;
